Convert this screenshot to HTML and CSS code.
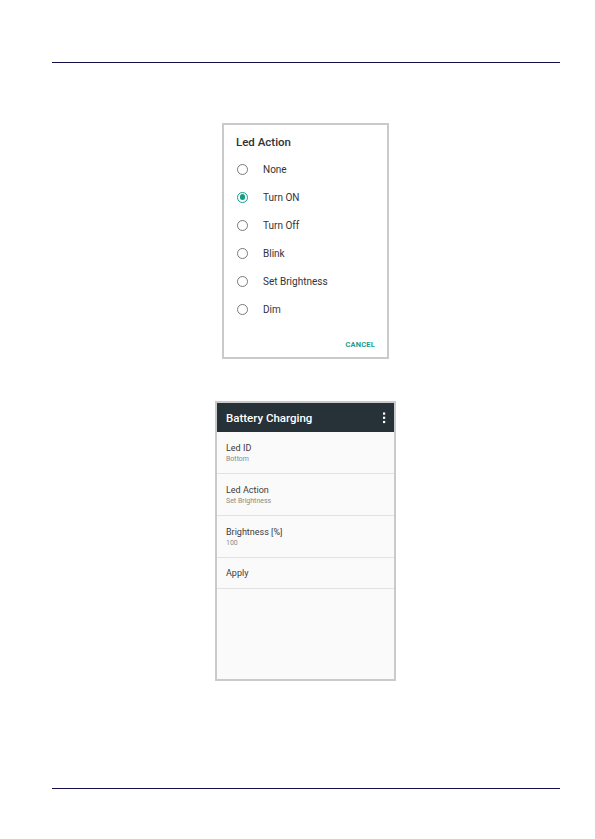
FILE: index.html
```html
<html>
  <head>
    <link rel="stylesheet" href="styles.css">
    <title>Led Action</title>
  </head>
  <body>
    <div class="page">
      <div class="rule"></div>

      <!-- dialog screenshot -->
      <div class="dialog">
        <div class="dialog-title">Led Action</div>
        <ul class="choices">
          <li><span class="radio"></span>None</li>
          <li><span class="radio checked"></span>Turn ON</li>
          <li><span class="radio"></span>Turn Off</li>
          <li><span class="radio"></span>Blink</li>
          <li><span class="radio"></span>Set Brightness</li>
          <li><span class="radio"></span>Dim</li>
        </ul>
        <div class="dialog-actions">
          <span class="btn">CANCEL</span>
        </div>
      </div>

      <!-- settings screen -->
      <div class="phone">
        <div class="appbar">
          <span class="appbar-title">Battery Charging</span>
          <svg class="more" width="4" height="12" viewBox="0 0 4 12">
            <rect x="1" y="0.5" width="2.2" height="2.2" fill="#fff"/>
            <rect x="1" y="4.7" width="2.2" height="2.2" fill="#fff"/>
            <rect x="1" y="8.9" width="2.2" height="2.2" fill="#fff"/>
          </svg>
        </div>
        <div class="item">
          <div class="item-title">Led ID</div>
          <div class="item-sub">Bottom</div>
        </div>
        <div class="item">
          <div class="item-title">Led Action</div>
          <div class="item-sub">Set Brightness</div>
        </div>
        <div class="item">
          <div class="item-title">Brightness [%]</div>
          <div class="item-sub">100</div>
        </div>
        <div class="item single">
          <div class="item-title">Apply</div>
        </div>
      </div>

      <div class="rule bottom"></div>
    </div>
  </body>
</html>
```

FILE: styles.css
```css
body {
	margin: 0;
	background: #fff;
	font-family: Roboto, "Liberation Sans", sans-serif;
}

.page {
	width: 508px;
	padding: 62px 0 0 52px;
}

.rule {
	height: 1px;
	background: #14104a;
}

.rule.bottom {
	margin-top: 107px;
}

/* Dialog */
.dialog {
	width: 163px;
	height: 232px;
	margin: 60px 0 0 170px;
	border: 2px solid #cacaca;
	background: #fff;
	display: flex;
	flex-direction: column;
}

.dialog-title {
	padding: 9px 0 0 12px;
	font-size: 11.5px;
	line-height: 16px;
	font-weight: 500;
	color: #333;
}

.choices {
	list-style: none;
	margin: 5px 0 0;
	padding: 0;
}

.choices li {
	height: 28px;
	display: flex;
	align-items: center;
	font-size: 10px;
	color: #333;
}

.radio {
	width: 9px;
	height: 9px;
	margin: 0 15px 0 13px;
	border: 1.3px solid #7a7a7a;
	border-radius: 50%;
	position: relative;
}

.radio.checked {
	border-color: #139d86;
}

.radio.checked:after {
	content: "";
	position: absolute;
	top: 1.75px;
	left: 1.75px;
	width: 5.5px;
	height: 5.5px;
	border-radius: 50%;
	background: #139d86;
}

.dialog-actions {
	margin-top: 17px;
	display: flex;
	justify-content: flex-end;
	padding-right: 12px;
}

.btn {
	font-size: 7.5px;
	line-height: 10px;
	font-weight: 700;
	color: #1a9e8f;
	letter-spacing: 0.2px;
}

/* Phone screen */
.phone {
	width: 177px;
	height: 276px;
	margin: 42px 0 0 163px;
	border: 2px solid #cacaca;
	background: #fafafa;
}

.appbar {
	height: 29px;
	background: #263238;
	display: flex;
	align-items: center;
	justify-content: space-between;
	padding: 0 9px;
}

.appbar-title {
	color: #fff;
	font-size: 11.5px;
	font-weight: 500;
}

.more {
	display: block;
	margin-right: -1px;
}

.item {
	padding: 10px 9px 9px;
	border-bottom: 1px solid #e2e2e2;
}

.item.single {
	padding: 9px 9px;
}

.item-title {
	font-size: 9px;
	line-height: 12px;
	color: #3a3a3a;
}

.item-sub {
	font-size: 7px;
	line-height: 10px;
	color: #8a8a8a;
}
```
